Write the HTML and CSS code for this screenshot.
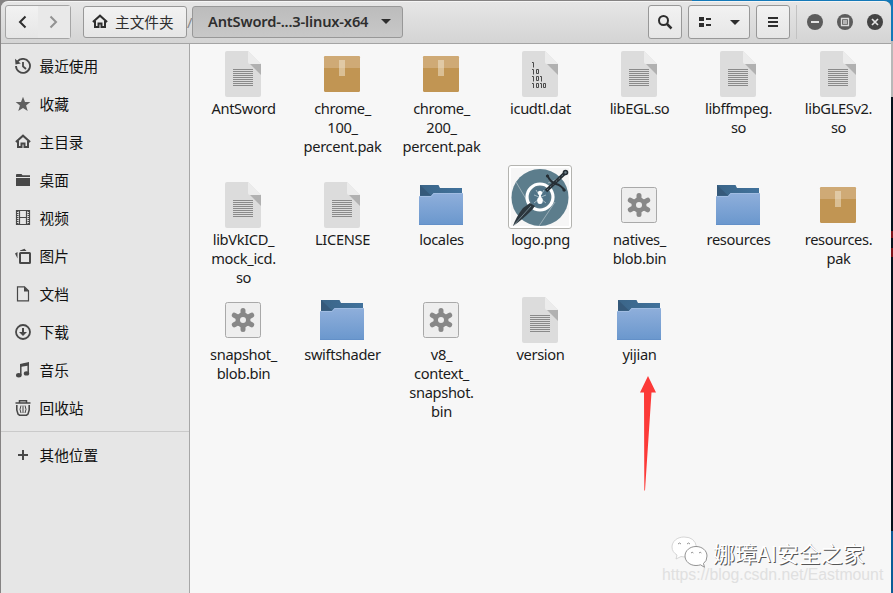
FILE: index.html
```html
<!DOCTYPE html>
<html lang="zh-CN">
<head>
<meta charset="utf-8">
<title>AntSword</title>
<link rel="stylesheet" href="styles.css">
</head>
<body>
<svg class="defs" width="0" height="0">
  <defs>
    <linearGradient id="fold" x1="0" y1="0" x2="0" y2="1"><stop offset="0" stop-color="#8fafdb"/><stop offset="1" stop-color="#6a97cd"/></linearGradient>
    <linearGradient id="back" x1="0" y1="0" x2="1" y2="0"><stop offset="0" stop-color="#3b6588"/><stop offset="1" stop-color="#41729c"/></linearGradient>
    <symbol id="sheet" viewBox="0 0 48 48">
      <path d="M8 1h21l13 13v31a2 2 0 0 1-2 2H8a2 2 0 0 1-2-2V3a2 2 0 0 1 2-2z" fill="#dcdcdc"/>
      <path d="M29 1l13 13H31a2 2 0 0 1-2-2z" fill="#ececec"/>
      <path d="M31 14h11v11z" fill="#b1b1b1"/>
    </symbol>
    <symbol id="doc" viewBox="0 0 48 48">
      <use href="#sheet"/>
      <path d="M14 19.500h20M14 21.500h20M14 23.500h20M14 25.500h20M14 27.500h20M14 29.500h20M14 31.500h20M14 33.500h20M14 35.500h20" stroke="#8a8a8a" stroke-width="1"/>
    </symbol>
    <symbol id="pak" viewBox="0 0 48 48">
      <rect x="6" y="6" width="36" height="36" rx="1.500" fill="#c19553"/>
      <path d="M6 18V7.500a1.500 1.500 0 0 1 1.500-1.500h33a1.500 1.500 0 0 1 1.500 1.500V18z" fill="#cfaa76"/>
      <path d="M21 10h6v8h-6z" fill="#e0c9a5"/><path d="M21 18h6v8h-6z" fill="#dabf94"/>
    </symbol>
    <symbol id="folder" viewBox="0 0 48 48">
      <path d="M3 15V4h18.500l1.500 3h22v8z" fill="url(#back)"/>
      <path d="M3 4l11 10.500H3z" fill="#35597a"/>
      <path d="M2 15h12l2.500-3H46v32H2z" fill="url(#fold)"/>
      <path d="M2 15.500h12.200l2.500-3H46" fill="none" stroke="#a0bce2"/>
      <path d="M2 43.500h44" stroke="#6390c8"/>
    </symbol>
    <symbol id="gear" viewBox="0 0 48 48">
      <rect x="6.500" y="6.500" width="35" height="35" rx="2" fill="#eee" stroke="#a9a9a9"/>
      <g stroke="#888" stroke-width="5" stroke-linecap="round"><path d="M24 14.500v19M15.300 19.200l17.400 9.600M32.700 19.200l-17.400 9.600"/></g>
      <circle cx="24" cy="24" r="7.500" fill="#888"/><circle cx="24" cy="24" r="3" fill="#eee"/>
    </symbol>
    <symbol id="home" viewBox="0 0 16 16">
      <path d="M.9 7.900L8 1.700l7.100 6.200" fill="none" stroke="currentColor" stroke-width="2"/>
      <path d="M3 7v6h3.500V9.500h3V13H13V7" fill="none" stroke="currentColor" stroke-width="2"/>
    </symbol>
  </defs>
</svg>
<div class="desktop">
<div class="window">
  <header class="bar">
    <div class="nav">
      <span class="arrow"><svg width="16" height="16"><path d="M11.500 2.500L6 8l5.500 5.500" fill="none" stroke="#2e2e2e" stroke-width="2"/></svg></span>
      <span class="arrow off"><svg width="16" height="16"><path d="M4.500 2.500L10 8l-5.500 5.500" fill="none" stroke="#929292" stroke-width="2"/></svg></span>
    </div>
    <div class="btn home"><svg width="16" height="16"><use href="#home"/></svg><span>主文件夹</span></div>
    <span class="slash">/</span>
    <div class="btn current"><span>AntSword-...3-linux-x64</span><i class="caret"></i></div>
    <div class="btn search"><svg width="16" height="16"><circle cx="6.500" cy="6.500" r="4.500" fill="none" stroke="#2e2e2e" stroke-width="2"/><path d="M10 10l4.500 4.500" stroke="#2e2e2e" stroke-width="2.500"/></svg></div>
    <div class="btn view"><svg width="16" height="16"><path d="M2 3h5v4H2zM2 9h5v4H2zM9 4h5v2H9zM9 10h5v2H9z" fill="#2e2e2e"/></svg><i class="caret"></i></div>
    <div class="btn menu"><svg width="16" height="16"><path d="M3 4h10M3 8h10M3 12h10" stroke="#2e2e2e" stroke-width="2"/></svg></div>
    <div class="controls">
      <svg width="16" height="16"><circle cx="8" cy="8" r="8" fill="#5c5c5c"/><path d="M4 8h8" stroke="#e4e4e4" stroke-width="2"/></svg>
      <svg width="16" height="16"><circle cx="8" cy="8" r="8" fill="#5c5c5c"/><path d="M4.500 4.500h7v7h-7z" fill="#5c5c5c" stroke="#dcdcdc" stroke-width="1.300"/><path d="M6 6h4v4H6z" fill="#b4b4b4"/></svg>
      <svg width="16" height="16"><circle cx="8" cy="8" r="8" fill="#444"/><path d="M5 5l6 6M11 5l-6 6" stroke="#e4e4e4" stroke-width="1.700"/></svg>
    </div>
  </header>
  <div class="body">
    <aside class="side">
      <div class="place"><svg width="16" height="16"><path d="M2.600 3.400A7 7 0 1 1 1 8" fill="none" stroke="currentColor" stroke-width="1.800"/><path d="M0 .8l.5 5.700 5.300-1z" fill="currentColor"/><path d="M8 4v4.300l3 2.700" fill="none" stroke="currentColor" stroke-width="1.800"/></svg>最近使用</div>
      <div class="place"><svg width="16" height="16"><path d="M8 .8l2 5.100 5.300.2-4.200 3.500 1.600 5.500L8 12.100l-4.700 3 1.600-5.500L.7 6.100l5.300-.2z" fill="#606060"/></svg>收藏</div>
      <div class="place"><svg width="16" height="16"><use href="#home"/></svg>主目录</div>
      <div class="place"><svg width="16" height="16"><path d="M1 3.500V2.800Q1 2 2 2h4.500l1 1.300h7.500V5H1zM1 6h14v8H1z" fill="currentColor"/></svg>桌面</div>
      <div class="place"><svg width="16" height="16"><path d="M1.500.5h13v14h-13zM4.500.5v14M11.500.5v14M4.500 7.500h7" fill="none" stroke="currentColor" stroke-width="1.200"/><path d="M2.700 1v14M13.300 1v14" stroke="currentColor" stroke-width="1.600" stroke-dasharray="1 1"/></svg>视频</div>
      <div class="place"><svg width="16" height="16"><rect x="5" y="5" width="10" height="10" rx=".5" fill="none" stroke="currentColor" stroke-width="2"/><path d="M0 5.500L2.500 4v6.500zM5 2.500L9.500.8l2 2.200H5z" fill="currentColor"/></svg>图片</div>
      <div class="place"><svg width="16" height="16"><path d="M2.500.8h7l4 4v10h-11z" fill="none" stroke="currentColor" stroke-width="1.200"/><path d="M9 .5V5.500h5z" fill="currentColor"/></svg>文档</div>
      <div class="place"><svg width="16" height="16"><circle cx="8" cy="8" r="7" fill="none" stroke="currentColor" stroke-width="1.800"/><path d="M7 4h2v4h3L8 12 4 8h3z" fill="currentColor"/></svg>下载</div>
      <div class="place"><svg width="16" height="16"><path d="M5.800 13V3.200l7.400-1.500V11" fill="none" stroke="currentColor" stroke-width="1.500"/><path d="M5 2l9-2v3.500L5 5z" fill="currentColor"/><ellipse cx="3.800" cy="13.300" rx="2.800" ry="2.200" fill="currentColor"/><ellipse cx="11.500" cy="11.400" rx="2.700" ry="2.200" fill="currentColor"/></svg>音乐</div>
      <div class="place"><svg width="16" height="16"><path d="M.5 3h15M4.500 2.500V.8h7v1.700" fill="none" stroke="currentColor" stroke-width="1.500"/><path d="M1.800 5q-.6 5 1.200 9l1.500 1.200h7L13 14q1.800-4 1.200-9" fill="none" stroke="currentColor" stroke-width="1.600"/><path d="M6 5.500q-2 4 0 7.500M10 5.500q2 4 0 7.500M8 5.500V13" fill="none" stroke="currentColor" stroke-width="1"/></svg>回收站</div>
      <hr>
      <div class="place"><svg width="16" height="16"><path d="M3 8h10M8 3v10" stroke="currentColor" stroke-width="2"/></svg>其他位置</div>
    </aside>
    <main class="files">
      <div class="file"><svg><use href="#doc"/></svg><span>AntSword</span></div>
      <div class="file"><svg><use href="#pak"/></svg><span>chrome_<br>100_<br>percent.pak</span></div>
      <div class="file"><svg><use href="#pak"/></svg><span>chrome_<br>200_<br>percent.pak</span></div>
      <div class="file"><svg viewBox="0 0 48 48"><use href="#sheet"/><g fill="none" stroke="#4a4a4a" stroke-width="1"><path d="M16 12.500h1.500v5"/><path d="M16 19.500h1.500v5M20.500 19.500h2v4h-2zM16 26.500h1.500v5M20.500 26.500h2v4h-2zM24 26.500h1.500v5M16 33.500h1.500v4.500M20.500 33.500h2v4h-2zM24 33.500h1.500v4.500M27.500 33.500h2v4h-2z"/></g></svg><span>icudtl.dat</span></div>
      <div class="file"><svg><use href="#doc"/></svg><span>libEGL.so</span></div>
      <div class="file"><svg><use href="#doc"/></svg><span>libffmpeg.<br>so</span></div>
      <div class="file"><svg><use href="#doc"/></svg><span>libGLESv2.<br>so</span></div>

      <div class="file tall"><svg><use href="#doc"/></svg><span>libVkICD_<br>mock_icd.<br>so</span></div>
      <div class="file tall"><svg><use href="#doc"/></svg><span>LICENSE</span></div>
      <div class="file tall"><svg><use href="#folder"/></svg><span>locales</span></div>
      <div class="file"><svg class="thumb" viewBox="0 0 64 64">
        <rect x=".5" y=".5" width="63" height="63" rx="2.500" fill="#fff" stroke="#b4b4b0"/>
        <rect x="3" y="3" width="58" height="58" fill="#f6f6f6"/>
        <circle cx="32" cy="32.500" r="28.500" fill="#5c7d8c"/>
        <path d="M8 17l13 22M47 37L31 61M40 18L54 12" stroke="#a9bac2" stroke-width=".8"/>
        <circle cx="32" cy="32" r="13" fill="#587888" stroke="#fff" stroke-width="3.200"/>
        <circle cx="32" cy="32" r="9.700" fill="#507387"/>
        <path d="M28 25l2.500 4M36 25l-2.500 4M26 30l5 2M38 30l-5 2M26 38l5-4M38 38l-5-4" stroke="#b9c9d0" stroke-width=".8"/>
        <ellipse cx="32" cy="35.500" rx="2.800" ry="3.500" fill="#fff"/><circle cx="32" cy="28" r="2.200" fill="#fff"/><path d="M31 29h2v5h-2z" fill="#fff"/>
        <path d="M5 61q3-9 10-18l7-5 5 3-3 4Q14 55 5 61z" fill="#2b363d"/><path d="M6 60L23 41" stroke="#71838c"/>
        <path d="M38 26L57 8" stroke="#252e34" stroke-width="3.500"/><path d="M39 25L57 8" stroke="#697982" stroke-width="1" stroke-dasharray="2 2"/>
        <path d="M39 10q4 8 9 9t9 7" fill="none" stroke="#252e34" stroke-width="2"/>
        <circle cx="39.500" cy="11" r="1.600" fill="#252e34"/><circle cx="56" cy="25" r="1.600" fill="#252e34"/><circle cx="57.500" cy="7.500" r="2" fill="#71838c" stroke="#252e34" stroke-width="1.600"/>
      </svg><span>logo.png</span></div>
      <div class="file tall"><svg><use href="#gear"/></svg><span>natives_<br>blob.bin</span></div>
      <div class="file tall"><svg><use href="#folder"/></svg><span>resources</span></div>
      <div class="file tall"><svg><use href="#pak"/></svg><span>resources.<br>pak</span></div>

      <div class="file"><svg><use href="#gear"/></svg><span>snapshot_<br>blob.bin</span></div>
      <div class="file"><svg><use href="#folder"/></svg><span>swiftshader</span></div>
      <div class="file"><svg><use href="#gear"/></svg><span>v8_<br>context_<br>snapshot.<br>bin</span></div>
      <div class="file"><svg><use href="#doc"/></svg><span>version</span></div>
      <div class="file"><svg><use href="#folder"/></svg><span>yijian</span></div>
    </main>
  </div>
</div>
<div class="behind"><i class="sky"></i><i class="grey"></i><i class="dark"></i><i class="red"></i><i class="dark rest"></i><i class="blue"></i></div>
</div>
<svg class="pointer" width="18" height="116"><path d="M8 0l8 16.500h-4.500L5 114.500H4.300L4 16.500H0z" fill="#fc3a38"/></svg>
<div class="mark">
  <svg width="37" height="32" viewBox="0 0 37 32" fill="#fff" stroke="#777" stroke-width=".8">
    <path d="M13 1C6 1 1 5.500 1 11c0 3.500 2 6.200 5 8l-1 4 5-2.500q3 .8 6 .2Q25 20 25.500 11 24 1 13 1z" stroke="#ccc"/>
    <path d="M25 10.500c-6 0-11 4-11 9.500s5 9.500 11 9.500q2.500 0 4.500-.7l4 2.500-1-3.800Q36 25 36 20c0-5.500-5-9.500-11-9.500z"/>
    <path d="M7 8q1.500-2 3 0M16 8q1.500-2 3 0M20 17q1.200-1.500 2.400 0M28 17q1.200-1.500 2.400 0" fill="none"/>
  </svg>
  <span>娜璋AI安全之家</span>
</div>
<div class="url">https://blog.csdn.net/Eastmount</div>
</body>
</html>
```
FILE: styles.css
```css
* { box-sizing: border-box; }
body {
  margin: 0;
  width: 893px;
  height: 593px;
  overflow: hidden;
  position: relative;
  font: 14.67px/19px "Noto Sans", "Noto Sans CJK SC", sans-serif;
  color: #1b1b1b;
}
.defs { position: absolute; }
svg { display: block; flex: none; }
.desktop {
  display: flex;
  height: 593px;
  background: linear-gradient(90deg, #858383 0 692px, #1479b8 692px);
}
.window {
  width: 891px;
  height: 593px;
  padding: 1px 0 0 1px;
  background: #858585;
  background-clip: content-box;
  border-radius: 7px 7px 0 0;
  display: flex;
  flex-direction: column;
  overflow: hidden;
}
.bar {
  height: 43px;
  display: flex;
  align-items: center;
  padding: 0 8px 1px 4px;
  background: linear-gradient(#e6e6e6, #d4d4d4);
  border-top: 1px solid #f5f5f5;
  border-bottom: 1px solid #a4a4a4;
  border-radius: 7px 7px 0 0;
}
.nav, .btn {
  height: 34px;
  border: 1px solid #989898;
  border-radius: 3px;
  background: linear-gradient(#f2f2f2, #e6e6e6);
  display: flex;
  align-items: center;
}
.nav { width: 66px; border-color: #a5a5a5; }
.arrow { width: 33px; height: 32px; display: flex; align-items: center; justify-content: center; }
.arrow.off { background: #e9e9e9; }
.home { width: 104px; height: 32px; margin-left: 12px; padding-left: 8px; gap: 7px; color: #2e2e2e; }
.slash { width: 5px; color: #888; text-align: center; }
.current {
  width: 211px;
  height: 32px;
  padding: 0 11px 1px 15px;
  justify-content: space-between;
  background: linear-gradient(#bcbcbc, #c8c8c8);
  font-weight: 600;
  letter-spacing: -.18px;
  color: #2e2e2e;
}
.caret { border: 5px solid transparent; border-top-color: #2e2e2e; border-bottom: 0; }
.search { width: 34px; margin-left: auto; justify-content: center; }
.view { width: 62px; margin-left: 6px; padding: 0 9px 0 8px; justify-content: space-between; }
.menu { width: 34px; margin-left: 6px; justify-content: center; }
.controls {
  margin-left: 6px;
  padding-left: 10px;
  height: 34px;
  border-left: 1px solid #c2c2c2;
  display: flex;
  align-items: center;
  gap: 14px;
}
.body { flex: 1; display: flex; }
.side {
  width: 189px;
  padding-top: 3px;
  background: #e6e6e6;
  border-right: 1px solid #a7a7a7;
}
.place {
  height: 38px;
  padding-left: 14px;
  display: flex;
  align-items: center;
  gap: 8.5px;
  color: #111;
}
.place svg { color: #484848; }
.side hr { margin: 4px 0; border: 0; border-top: 1px solid #cacaca; }
.files {
  flex: 1;
  background: #f7f7f7;
  padding: 6px 0 0 3px;
  display: grid;
  grid-template-columns: repeat(6, 99px) 101px;
  align-content: start;
  row-gap: 9px;
}
.file { text-align: center; }
.file svg { width: 48px; height: 48px; margin: 0 auto 1px; }
.file span { display: block; padding-left: 2px; letter-spacing: -.35px; }
.file .thumb { width: 64px; height: 64px; }
.tall { padding-top: 16px; }
.behind { width: 2px; display: flex; flex-direction: column; }
.sky { height: 41px; background: #1479b8; }
.grey { height: 56px; background: #b8b8b8; }
.dark { height: 134px; background: #06121c; }
.red { height: 26px; background: linear-gradient(#7c1218 7px, #06121c 7px 17px, #7c1218 17px); }
.rest { height: 274px; }
.blue { flex: 1; background: #0b5c96; }
.pointer { position: absolute; left: 640px; top: 376px; }
.mark {
  position: absolute;
  left: 671px;
  top: 536px;
  display: flex;
  align-items: center;
  gap: 5px;
  font: 22px/32px "Noto Sans CJK SC", sans-serif;
  color: #fff;
  text-shadow: 1px 1px 0 #555;
  white-space: nowrap;
}
.url {
  position: absolute;
  left: 662px;
  top: 565px;
  font: 15.8px/19px "Liberation Sans", sans-serif;
  color: #e0e0e0;
}
```
